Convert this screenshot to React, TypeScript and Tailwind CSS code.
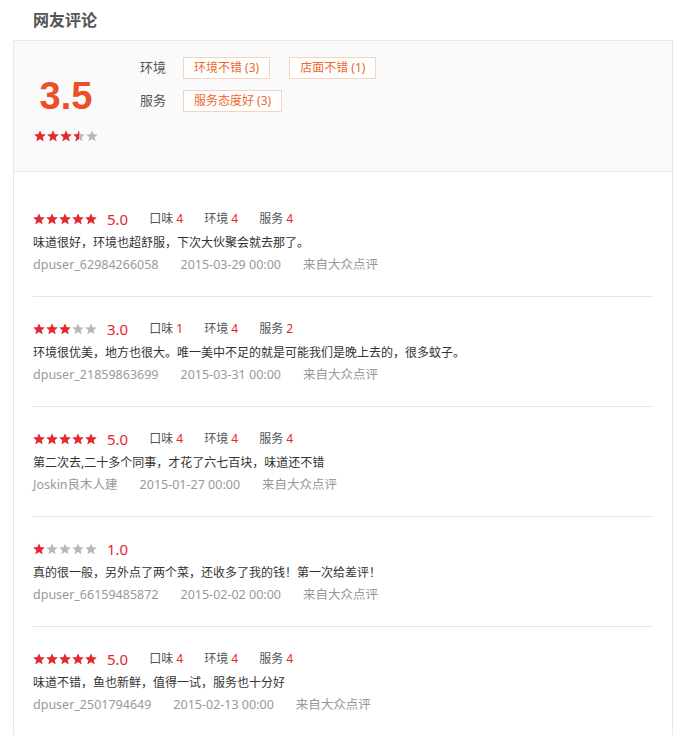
import React from 'react'

const reviews = [
  { stars: 5, score: '5.0', taste: 4, env: 4, service: 4, text: '味道很好，环境也超舒服，下次大伙聚会就去那了。', user: 'dpuser_62984266058', date: '2015-03-29 00:00' },
  { stars: 3, score: '3.0', taste: 1, env: 4, service: 2, text: '环境很优美，地方也很大。唯一美中不足的就是可能我们是晚上去的，很多蚊子。', user: 'dpuser_21859863699', date: '2015-03-31 00:00' },
  { stars: 5, score: '5.0', taste: 4, env: 4, service: 4, text: '第二次去,二十多个同事，才花了六七百块，味道还不错', user: 'Joskin良木人建', date: '2015-01-27 00:00' },
  { stars: 1, score: '1.0', text: '真的很一般，另外点了两个菜，还收多了我的钱！第一次给差评！', user: 'dpuser_66159485872', date: '2015-02-02 00:00' },
  { stars: 5, score: '5.0', taste: 4, env: 4, service: 4, text: '味道不错，鱼也新鲜，值得一试，服务也十分好', user: 'dpuser_2501794649', date: '2015-02-13 00:00' },
]

const STAR = '6,0.5 7.6,4.3 11.7,4.6 8.6,7.2 9.6,11.3 6,9.1 2.4,11.3 3.4,7.2 0.3,4.6 4.4,4.3'

function Star({ fill }: { fill: number }) {
  // fill: 0, 0.5 or 1
  const id = React.useId()
  return (
    <svg width="13" height="12" viewBox="0 0 13 12" className="block">
      <defs>
        <clipPath id={id}>
          <rect x="0" y="0" width={12 * fill} height="12" />
        </clipPath>
      </defs>
      <polygon points={STAR} fill="#b8b8b8" />
      {fill > 0 && <polygon points={STAR} fill="#e8262c" clipPath={`url(#${id})`} />}
    </svg>
  )
}

function Stars({ value }: { value: number }) {
  return (
    <div className="flex">
      {[0, 1, 2, 3, 4].map(i => (
        <Star key={i} fill={value >= i + 1 ? 1 : value > i ? 0.5 : 0} />
      ))}
    </div>
  )
}

function Tag({ children }: { children: React.ReactNode }) {
  return (
    <span className="h-[22px] px-[10px] border border-[#f8d3bb] bg-white text-[12px] leading-[20px] text-[#f0672e]">
      {children}
    </span>
  )
}

export default function App() {
  return (
    <div className="w-[688px] min-h-[735px] bg-white font-['Noto_Sans','Noto_Sans_CJK_SC',sans-serif] text-[12px] text-[#333]">
      <h2 className="pl-[33px] pt-[9px] h-[40px] text-[16px] leading-[22px] font-bold text-[#555]">网友评论</h2>

      <div className="ml-[13px] w-[660px] border border-[#e8e8e8] border-b-0">
        <div className="flex h-[131px] bg-[#fafafa] border-b border-[#e8e8e8]">
          <div className="ml-[20px] w-[64px] pt-[35px] flex flex-col items-center">
            <div className="font-['Liberation_Sans',sans-serif] text-[38px] leading-[40px] font-bold text-[#ea4f25]">3.5</div>
            <div className="mt-[14px]">
              <Stars value={3.5} />
            </div>
          </div>
          <div className="ml-[42px] pt-[16px] flex flex-col gap-[11px]">
            <div className="flex items-center">
              <span className="w-[43px] text-[13px] text-[#555]">环境</span>
              <div className="flex gap-[19px]">
                <Tag>环境不错 (3)</Tag>
                <Tag>店面不错 (1)</Tag>
              </div>
            </div>
            <div className="flex items-center">
              <span className="w-[43px] text-[13px] text-[#555]">服务</span>
              <Tag>服务态度好 (3)</Tag>
            </div>
          </div>
        </div>

        <div className="px-[19px] pt-[15px]">
          {reviews.map((r, i) => (
            <div key={i} className={`pt-[22px] pb-[21px] ${i < reviews.length - 1 ? 'border-b border-[#e6e6e6]' : ''}`}>
              <div className="flex items-center h-[20px]">
                <Stars value={r.stars} />
                <span className="ml-[9px] text-[15px] text-[#e4262b]">{r.score}</span>
                {r.taste !== undefined && (
                  <div className="ml-[21px] flex gap-[21px] text-[#555]">
                    <span>口味 <span className="text-[#e4262b]">{r.taste}</span></span>
                    <span>环境 <span className="text-[#e4262b]">{r.env}</span></span>
                    <span>服务 <span className="text-[#e4262b]">{r.service}</span></span>
                  </div>
                )}
              </div>
              <div className="mt-[4px] h-[20px] leading-[20px] text-[#333]">{r.text}</div>
              <div className="mt-[2px] h-[20px] leading-[20px] text-[12.5px] text-[#999] flex gap-[22px]">
                <span>{r.user}</span>
                <span>{r.date}</span>
                <span>来自大众点评</span>
              </div>
            </div>
          ))}
        </div>
      </div>
    </div>
  )
}
